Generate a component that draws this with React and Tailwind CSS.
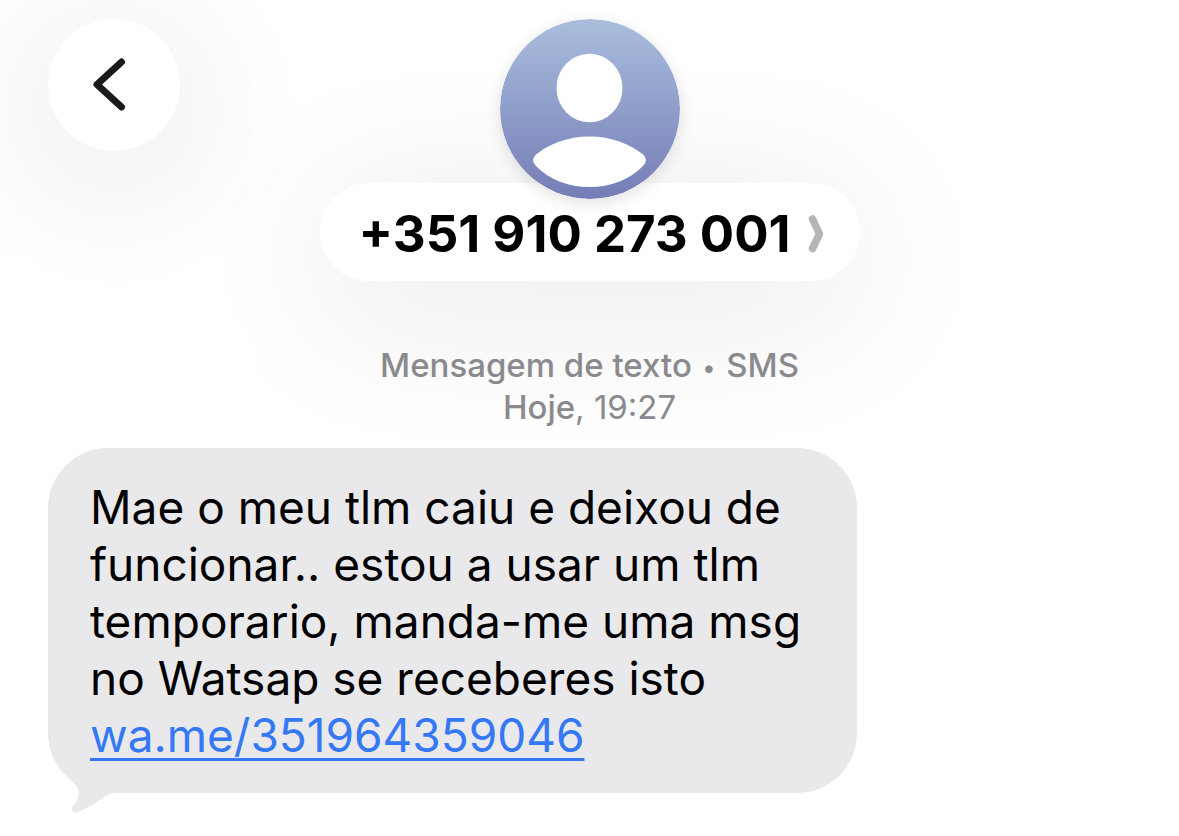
import React from 'react';

const MESSAGE_LINES = [
  'Mae o meu tlm caiu e deixou de',
  'funcionar.. estou a usar um tlm',
  'temporario, manda-me uma msg',
  'no Watsap se receberes isto',
];

const BackIcon = () => (
  <svg width="34" height="56" viewBox="0 0 34 56" fill="none" aria-hidden="true">
    <path d="M28.5 5 L4 27.5 L28.5 50" stroke="#1a1a1a" strokeWidth="7" strokeLinecap="round" strokeLinejoin="round" />
  </svg>
);

const Avatar = () => (
  <svg className="relative z-10 block rounded-full shadow-[0_4px_16px_rgba(0,0,0,0.12)]" width="180" height="180" viewBox="0 0 180 180" aria-hidden="true">
    <defs>
      <linearGradient id="avatar-bg" x1="0" y1="0" x2="0" y2="1">
        <stop offset="0" stopColor="#a9bedd" />
        <stop offset="1" stopColor="#757db6" />
      </linearGradient>
    </defs>
    <circle cx="90" cy="90" r="90" fill="url(#avatar-bg)" />
    <ellipse cx="89.5" cy="69" rx="33" ry="34.3" fill="#fff" />
    <path d="M89.5 117.5 C111 117.5 130 125 143 135.5 Q149 141 143 147 C129 161 111 168 89.5 168 C68 168 50 161 36 147 Q30 141 36 135.5 C49 125 68 117.5 89.5 117.5Z" fill="#fff" />
  </svg>
);

const ChevronIcon = () => (
  <svg width="18" height="40" viewBox="0 0 18 40" fill="none" aria-hidden="true">
    <path d="M5.5 5 L12.5 20 L5.5 34.5" stroke="#b5b5b7" strokeWidth="7.5" strokeLinecap="round" strokeLinejoin="round" />
  </svg>
);

const BubbleTail = () => (
  <svg className="absolute top-full left-4 -mt-5" width="60" height="42" viewBox="0 0 60 42" aria-hidden="true">
    <path d="M0 0 C3 5 10 9 13 14 C17 21 14 28 9 33 C6 37 9 41 14 39 C25 35 34 28 42 23 Q46 20 52 20 L52 0Z" fill="#e9e9eb" />
  </svg>
);

const App = () => {
  return (
    <div className="min-h-screen overflow-hidden bg-white font-['Inter',sans-serif] text-black">
      <header className="grid grid-cols-[1fr_auto_1fr] items-start px-12 pt-[19px]">
        <button type="button" aria-label="Voltar" className="flex size-[132px] items-center justify-center rounded-full bg-white pr-2 shadow-[0_24px_160px_rgba(0,0,0,0.14)]">
          <BackIcon />
        </button>
        <div className="flex flex-col items-center">
          <Avatar />
          <button type="button" className="-mt-4 flex h-[98px] w-[540px] items-center justify-center gap-4 rounded-full bg-white pt-1 pl-1 text-[51px] font-bold whitespace-nowrap shadow-[0_24px_160px_rgba(0,0,0,0.11)]">
            +351 910 273 001
            <ChevronIcon />
          </button>
        </div>
      </header>

      <main className="px-12 pt-[63px]">
        <div className="text-center text-[33px] leading-[42px] text-[#8a8a8e]">
          <p className="font-medium">
            Mensagem de texto <span className="mx-0.5 align-middle text-2xl leading-none">•</span> SMS
          </p>
          <p><span className="font-medium">Hoje</span>, 19:27</p>
        </div>
        <div className="relative mt-5 w-fit rounded-[60px] bg-[#e9e9eb] pt-[31px] pr-14 pb-[29px] pl-[42px] text-[46px] leading-[57px]">
          {MESSAGE_LINES.map((line) => (
            <p key={line}>{line}</p>
          ))}
          <a href="https://wa.me/351964359046" className="block w-fit text-[#3478f6] underline decoration-3 underline-offset-6">
            wa.me/351964359046
          </a>
          <BubbleTail />
        </div>
      </main>
    </div>
  );
};

export default App;
